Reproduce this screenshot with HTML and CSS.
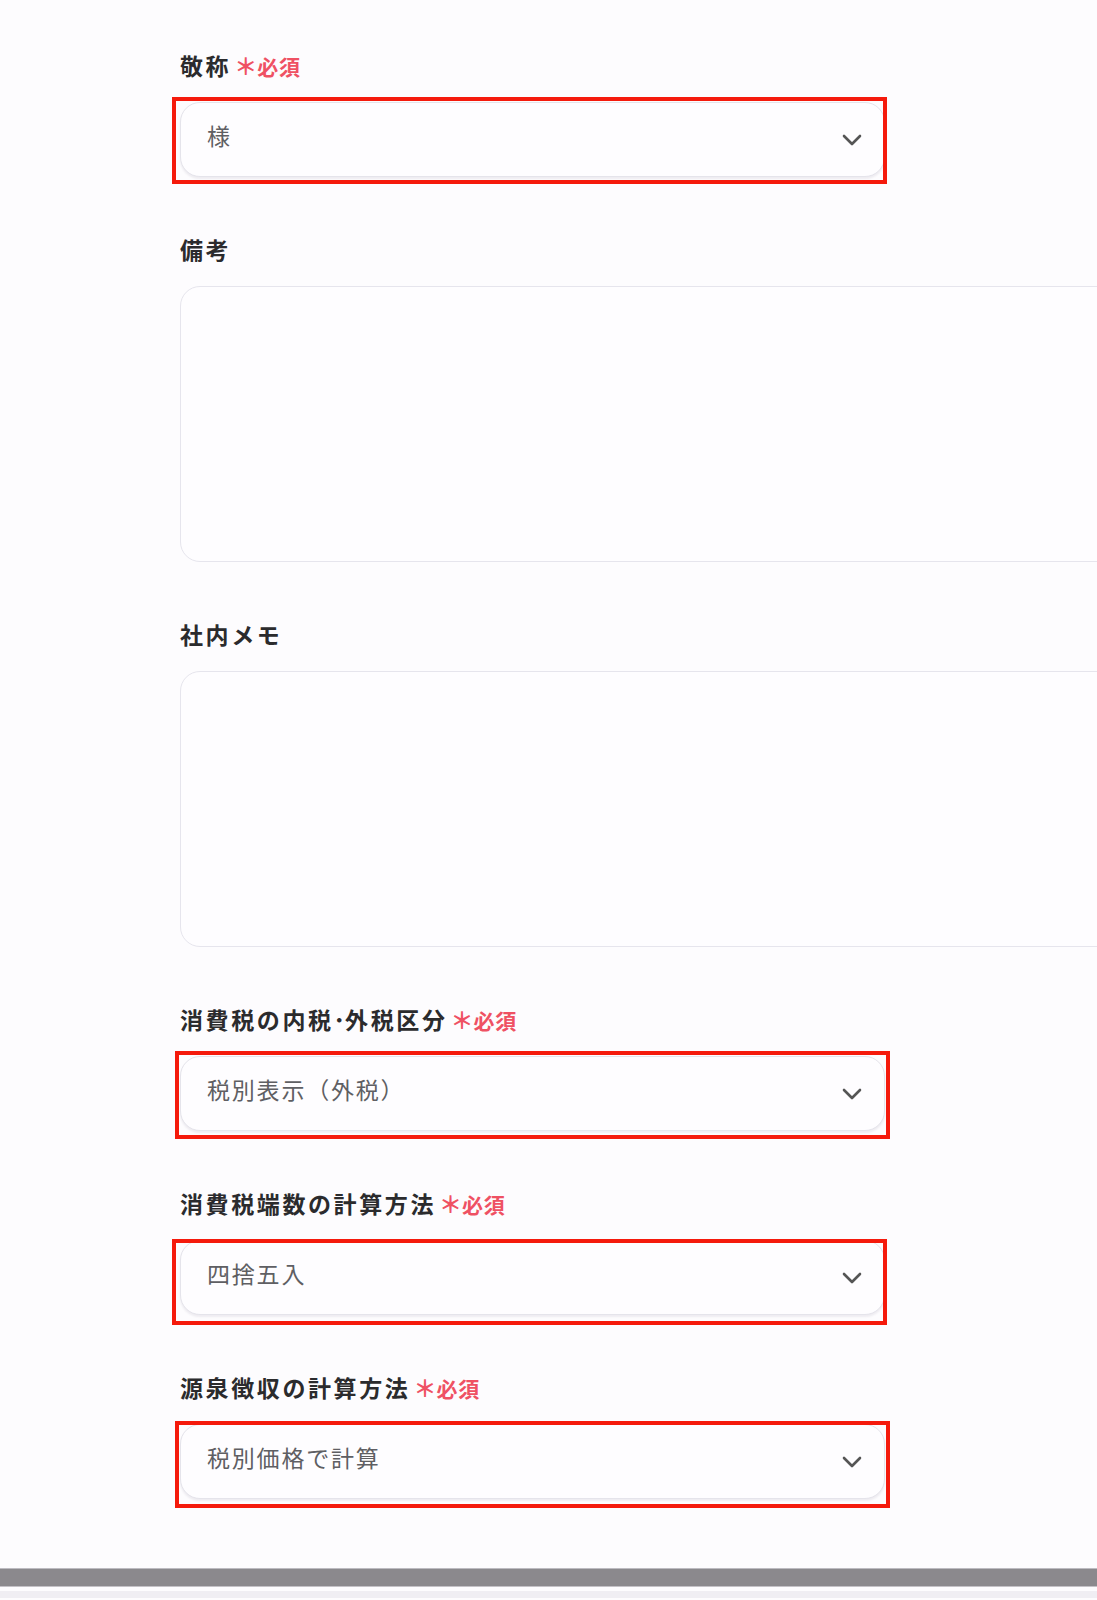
FILE: index.html
```html
<!DOCTYPE html>
<html lang="ja">
<head>
<meta charset="utf-8">
<title>フォーム</title>
<link rel="stylesheet" href="styles.css">
</head>
<body>
<div class="page">
  <form class="form">
    <div class="field">
      <div class="label">敬称<span class="req"><span class="ast">＊</span>必須</span></div>
      <div class="control">
        <div class="select"><span class="value">様</span><svg class="chev" width="20" height="12" viewBox="0 0 20 12"><polyline points="2,2 10,10 18,2" fill="none" stroke="#555" stroke-width="2.6" stroke-linecap="round" stroke-linejoin="round"/></svg></div>
        <div class="mark mark-a"></div>
      </div>
    </div>
    <div class="field">
      <div class="label">備考</div>
      <div class="textarea"></div>
    </div>
    <div class="field">
      <div class="label">社内メモ</div>
      <div class="textarea"></div>
    </div>
    <div class="field">
      <div class="label">消費税の内税<span class="dot">･</span>外税区分<span class="req"><span class="ast">＊</span>必須</span></div>
      <div class="control">
        <div class="select"><span class="value">税別表示（外税）</span><svg class="chev" width="20" height="12" viewBox="0 0 20 12"><polyline points="2,2 10,10 18,2" fill="none" stroke="#555" stroke-width="2.6" stroke-linecap="round" stroke-linejoin="round"/></svg></div>
        <div class="mark mark-b"></div>
      </div>
    </div>
    <div class="field">
      <div class="label">消費税端数の計算方法<span class="req"><span class="ast">＊</span>必須</span></div>
      <div class="control">
        <div class="select"><span class="value">四捨五入</span><svg class="chev" width="20" height="12" viewBox="0 0 20 12"><polyline points="2,2 10,10 18,2" fill="none" stroke="#555" stroke-width="2.6" stroke-linecap="round" stroke-linejoin="round"/></svg></div>
        <div class="mark mark-c"></div>
      </div>
    </div>
    <div class="field">
      <div class="label">源泉徴収の計算方法<span class="req"><span class="ast">＊</span>必須</span></div>
      <div class="control">
        <div class="select"><span class="value">税別価格で計算</span><svg class="chev" width="20" height="12" viewBox="0 0 20 12"><polyline points="2,2 10,10 18,2" fill="none" stroke="#555" stroke-width="2.6" stroke-linecap="round" stroke-linejoin="round"/></svg></div>
        <div class="mark mark-d"></div>
      </div>
    </div>
  </form>
  <div class="bar"></div>
  <div class="line"></div>
</div>
</body>
</html>
```
FILE: styles.css
```css
html, body {
  margin: 0;
  padding: 0;
  background: #fdfcfe;
}
body {
  overflow: hidden;
  font-family: "Noto Sans CJK JP", "Noto Sans", sans-serif;
}
.page {
  width: 1097px;
  height: 1600px;
  overflow: hidden;
}
.form {
  display: flex;
  flex-direction: column;
  gap: 58px;
  padding: 51px 0 69px 180px;
}
.field {
  display: flex;
  flex-direction: column;
  gap: 23px;
}
.label {
  font-size: 23px;
  line-height: 28px;
  height: 28px;
  font-weight: 700;
  letter-spacing: 2.6px;
  color: #2b2b2d;
  display: flex;
  align-items: baseline;
  white-space: nowrap;
}
.dot {
  letter-spacing: 0;
}
.req {
  color: #ef5163;
  font-size: 21px;
  font-weight: 700;
  letter-spacing: 0.8px;
  margin-left: 3px;
}
.ast {
  font-size: 23px;
  letter-spacing: 0;
}
.control {
  position: relative;
  width: 705px;
}
.select {
  box-sizing: border-box;
  height: 75px;
  width: 705px;
  background: #fefdff;
  border: 1.5px solid #e5e4eb;
  border-radius: 20px;
  box-shadow: 0 2px 2px rgba(60, 50, 90, 0.08);
  display: flex;
  align-items: center;
  justify-content: space-between;
  padding: 0 22px 0 26px;
}
.value {
  font-size: 23px;
  color: #5f5f63;
  letter-spacing: 1.8px;
  margin-bottom: 10px;
}
.chev {
  display: block;
}
.textarea {
  box-sizing: border-box;
  width: 1000px;
  height: 276px;
  background: #fefdff;
  border: 1.5px solid #e6e5ed;
  border-radius: 20px;
}
.mark {
  position: absolute;
  border: 4px solid #f51a0c;
  pointer-events: none;
}
.mark-a { left: -8px; top: -5px; right: -2px; bottom: -7px; }
.mark-b { left: -5px; top: -5px; right: -5px; bottom: -8px; }
.mark-c { left: -8px; top: -1px; right: -2px; bottom: -10px; }
.mark-d { left: -5px; top: -3px; right: -5px; bottom: -9px; }
.bar {
  box-sizing: border-box;
  height: 19px;
  background: #8b898d;
  border-top: 1px solid #bdbbc1;
  border-bottom: 1px solid #c4c2c7;
}
.line {
  margin-top: 4px;
  height: 7px;
  background: #f0eef3;
}
```
